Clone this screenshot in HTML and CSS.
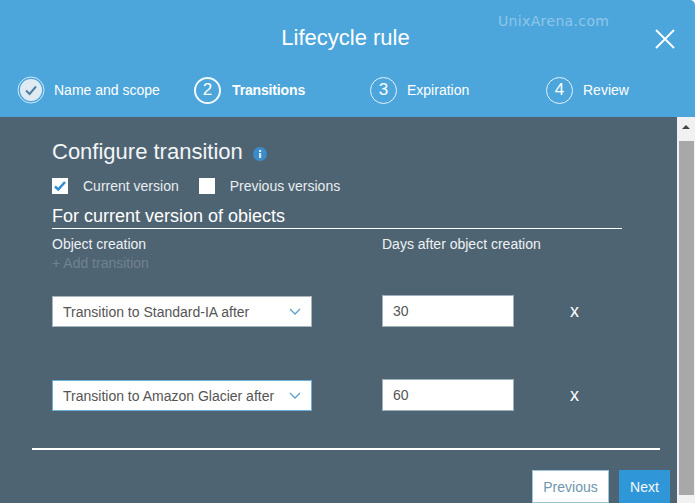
FILE: index.html
```html
<!DOCTYPE html>
<html lang="en">
<head>
    <meta charset="UTF-8">
    <meta name="viewport" content="width=device-width, initial-scale=1.0">
    <title>Lifecycle rule</title>
    <link rel="stylesheet" href="styles.css">
</head>
<body>

    <div class="dialog">
        <div class="header">
            <div class="title-row">
                <h1>Lifecycle rule</h1>
                <span class="watermark">UnixArena.com</span>
                <svg class="close-icon" width="22" height="22" viewBox="0 0 22 22">
                    <path d="M2 2 L20 20 M20 2 L2 20" stroke="#fff" stroke-width="1.8" fill="none"/>
                </svg>
            </div>
            <div class="steps">
                <div class="step">
                    <svg class="step-done" width="28" height="28" viewBox="0 0 28 28">
                        <circle cx="14" cy="14" r="13" fill="none" stroke="#cfe8f6" stroke-width="1"/>
                        <circle cx="14" cy="14" r="11" fill="#dfeaf2"/>
                        <path d="M9 14.5 L12.6 18 L19 10.5" fill="none" stroke="#4f7fa3" stroke-width="2"/>
                    </svg>
                    <span>Name and scope</span>
                </div>
                <div class="step active">
                    <span class="step-num">2</span>
                    <span>Transitions</span>
                </div>
                <div class="step">
                    <span class="step-num">3</span>
                    <span>Expiration</span>
                </div>
                <div class="step">
                    <span class="step-num">4</span>
                    <span>Review</span>
                </div>
            </div>
        </div>

        <div class="body">
            <div class="content">
                <div class="section">
                    <h2>Configure transition
                        <svg class="info-icon" width="14" height="14" viewBox="0 0 14 14">
                            <circle cx="7" cy="7" r="7" fill="#3b8ccb"/>
                            <rect x="6" y="6" width="2.2" height="5" fill="#dbe9f3"/>
                            <rect x="6" y="3" width="2.2" height="2" fill="#dbe9f3"/>
                        </svg>
                    </h2>
                    <div class="versions">
                        <span class="checkbox">
                            <svg width="16" height="16" viewBox="0 0 16 16">
                                <path d="M3 8.5 L6.3 11.5 L13 4" fill="none" stroke="#2f8fd0" stroke-width="2.6"/>
                            </svg>
                        </span>
                        <label class="current-label">Current version</label>
                        <span class="checkbox"></span>
                        <label>Previous versions</label>
                    </div>
                    <h3>For current version of obiects</h3>
                    <div class="columns">
                        <div>
                            <div class="col-title">Object creation</div>
                            <div class="add-link">+ Add transition</div>
                        </div>
                        <div class="col-title">Days after object creation</div>
                    </div>
                    <div class="rule">
                        <div class="select">
                            <span>Transition to Standard-IA after</span>
                            <svg width="12" height="7" viewBox="0 0 12 7"><path d="M1 1 L6 6 L11 1" fill="none" stroke="#5b9fc9" stroke-width="1.3"/></svg>
                        </div>
                        <div class="days-input">30</div>
                        <span class="remove">x</span>
                    </div>
                    <div class="rule">
                        <div class="select focused">
                            <span>Transition to Amazon Glacier after</span>
                            <svg width="12" height="7" viewBox="0 0 12 7"><path d="M1 1 L6 6 L11 1" fill="none" stroke="#5b9fc9" stroke-width="1.3"/></svg>
                        </div>
                        <div class="days-input">60</div>
                        <span class="remove">x</span>
                    </div>
                </div>
                <div class="footer">
                    <button class="btn-prev">Previous</button>
                    <button class="btn-next">Next</button>
                </div>
            </div>
            <div class="scrollbar">
                <div class="scroll-arrow"></div>
                <div class="scroll-thumb"></div>
            </div>
        </div>
    </div>

</body>
</html>
```

FILE: styles.css
```css
* {
    box-sizing: border-box;
    margin: 0;
    padding: 0;
    font-family: 'Liberation Sans', Arial, sans-serif;
}
body {
    width: 696px;
    height: 503px;
    overflow: hidden;
    background: #fff;
}
.dialog {
    display: flex;
    flex-direction: column;
    width: 695px;
    height: 503px;
}
.header {
    height: 117px;
    background: #4ca6dc;
    color: #fff;
    border-top-right-radius: 5px;
}
.title-row {
    position: relative;
    height: 76px;
    padding-top: 25px;
    text-align: center;
}
h1 {
    font-size: 22px;
    font-weight: normal;
    line-height: 26px;
    padding-right: 4px;
}
.watermark {
    position: absolute;
    left: 498px;
    top: 13px;
    font-family: 'DejaVu Sans', sans-serif;
    font-size: 14px;
    letter-spacing: 0.35px;
    color: #8ec6e8;
}
.close-icon {
    position: absolute;
    left: 654px;
    top: 28px;
}
.steps {
    display: grid;
    grid-template-columns: repeat(4, 176px);
    padding-left: 18px;
}
.step {
    display: flex;
    align-items: center;
    height: 28px;
    font-size: 14px;
}
.step-done {
    margin-left: -1px;
    margin-right: 9px;
}
.step-num {
    display: flex;
    align-items: center;
    justify-content: center;
    width: 27px;
    height: 27px;
    margin-right: 10px;
    border: 1px solid #e3f2fb;
    border-radius: 50%;
    font-size: 17px;
}
.active {
    font-weight: bold;
    letter-spacing: -0.15px;
}
.active .step-num {
    margin-right: 11px;
    border: 2px solid #f2f9fd;
    font-weight: normal;
}
.body {
    flex: 1;
    display: flex;
    min-height: 0;
    background: #4f6473;
    color: #fff;
}
.content {
    flex: 1;
    display: flex;
    flex-direction: column;
    padding: 22px 17px 0 32px;
}
.section {
    flex: 1;
    padding-left: 20px;
    padding-right: 38px;
    border-bottom: 2px solid #fff;
}
h2 {
    display: flex;
    align-items: center;
    font-size: 22px;
    font-weight: normal;
    line-height: 26px;
    color: #f2f5f7;
}
.info-icon {
    margin-left: 10px;
    margin-top: 4px;
}
.versions {
    display: flex;
    align-items: center;
    margin-top: 12px;
    height: 18px;
    font-size: 14px;
    color: #e8edf0;
}
.checkbox {
    display: flex;
    width: 16px;
    height: 16px;
    background: #fff;
    margin-right: 15px;
}
.current-label {
    margin-right: 20px;
}
h3 {
    margin-top: 12px;
    padding-bottom: 2px;
    font-size: 18px;
    font-weight: normal;
    line-height: 19px;
    border-bottom: 1px solid #fff;
}
.columns {
    display: grid;
    grid-template-columns: 330px 1fr;
    margin-top: 7px;
    font-size: 14px;
}
.col-title {
    line-height: 16px;
    color: #eef1f3;
}
.add-link {
    margin-top: 3px;
    line-height: 16px;
    color: #6f8290;
}
.rule {
    display: grid;
    grid-template-columns: 260px 132px 1fr;
    column-gap: 70px;
    align-items: center;
    margin-top: 23px;
    height: 32px;
    font-size: 14px;
}
.rule + .rule {
    margin-top: 52px;
}
.select {
    display: flex;
    align-items: center;
    justify-content: space-between;
    height: 31px;
    margin-top: 2px;
    padding: 0 10px;
    background: #fff;
    border: 1px solid #a9b5bd;
    color: #555;
}
.select.focused {
    border-color: #6bb0d6;
}
.days-input {
    display: flex;
    align-items: center;
    height: 32px;
    padding-left: 10px;
    background: #fff;
    border: 1px solid #9fb0bb;
    color: #555;
}
.remove {
    margin-left: -14px;
    font-size: 18px;
    line-height: 18px;
}
.footer {
    display: flex;
    justify-content: flex-end;
    gap: 10px;
    padding-top: 20px;
    margin-right: -10px;
}
button {
    height: 33px;
    font-size: 14px;
    border: none;
}
.btn-prev {
    width: 77px;
    background: #fff;
    border: 1px solid #9cc6dc;
    color: #6f96b0;
}
.btn-next {
    width: 51px;
    background: #2f97d8;
    color: #f4f9fc;
}
.scrollbar {
    display: flex;
    flex-direction: column;
    align-items: center;
    width: 18px;
    background: #f1f1f1;
}
.scroll-arrow {
    width: 0;
    height: 0;
    margin-top: 8px;
    border-left: 4px solid transparent;
    border-right: 4px solid transparent;
    border-bottom: 4px solid #444;
}
.scroll-thumb {
    width: 15px;
    flex: 1;
    margin-top: 12px;
    margin-bottom: 8px;
    background: #a8a8a8;
}
```
